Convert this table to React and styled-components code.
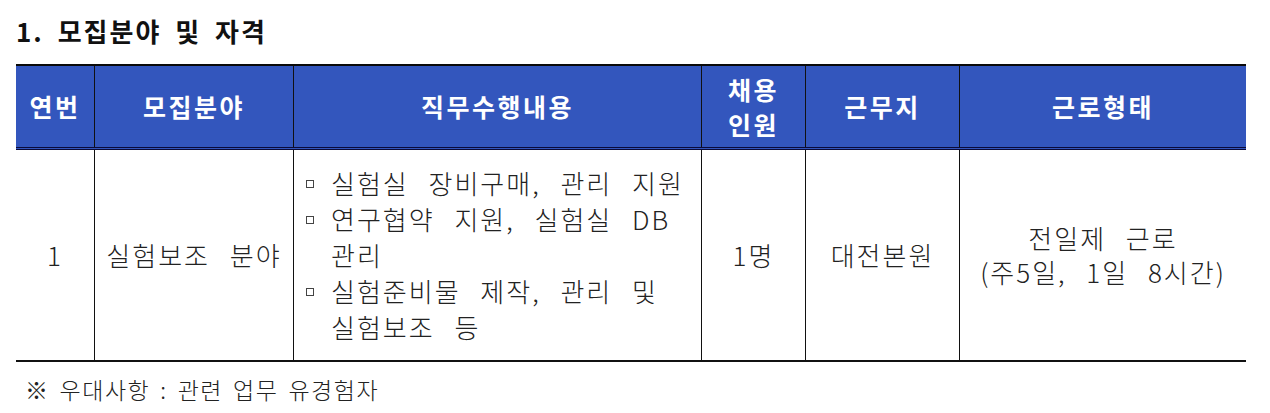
import React from "react";
import styled, { createGlobalStyle } from "styled-components";

const Global = createGlobalStyle`
  html, body { margin: 0; padding: 0; background: #fff; }
  body { font-family: "Noto Sans CJK KR", "Noto Sans", sans-serif; color: #1e1e1e; }
`;

const COLS = "78px 199px 408px 104px 154px 287px";

const Page = styled.div`
  width: 1270px;
  height: 413px;
  padding-left: 16px;
  box-sizing: border-box;
  overflow: hidden;
`;

const Title = styled.h2`
  margin: 0;
  height: 64px;
  padding-top: 15px;
  box-sizing: border-box;
  font-size: 26px;
  line-height: 32px;
  font-weight: 700;
  color: #111;
  letter-spacing: 2px;
  word-spacing: 6px;
  white-space: nowrap;
`;

const Table = styled.div`
  width: 1230px;
`;

const Row = styled.div`
  display: grid;
  grid-template-columns: ${COLS};
  height: ${(p) => p.$h}px;
  border-top: ${(p) => (p.$head ? "2px solid #0a0a0a" : "none")};
  border-bottom: ${(p) => (p.$head ? "3px double #0a0a3a" : "2px solid #111")};
  background: ${(p) => (p.$head ? "#3356bd" : "#fff")};
  box-sizing: content-box;
`;

const HeadCell = styled.div`
  display: flex;
  align-items: center;
  justify-content: center;
  text-align: center;
  color: #fff;
  font-weight: 700;
  font-size: 25px;
  line-height: 35px;
  letter-spacing: 2.5px;
  white-space: nowrap;
  border-left: ${(p) => (p.$first ? "none" : "1px solid #111")};
`;

const Cell = styled.div`
  display: flex;
  align-items: center;
  justify-content: ${(p) => (p.$left ? "flex-start" : "center")};
  text-align: ${(p) => (p.$left ? "left" : "center")};
  font-size: 26px;
  font-weight: 300;
  line-height: ${(p) => p.$lh || 36}px;
  padding-left: ${(p) => (p.$left ? 12 : 0)}px;
  letter-spacing: 2px;
  word-spacing: 12px;
  white-space: nowrap;
  border-left: ${(p) => (p.$first ? "none" : "1px solid #111")};
  color: #222;
`;

const List = styled.ul`
  margin: 0;
  padding: 0;
  list-style: none;
`;

const Item = styled.li`
  display: flex;
`;

const Bullet = styled.span`
  flex: 0 0 25px;
  position: relative;
  &::before {
    content: "";
    position: absolute;
    left: 0;
    top: 15px;
    width: 6px;
    height: 6px;
    border: 1px solid #444;
    background: #fff;
  }
`;

const Note = styled.p`
  margin: 0;
  padding: 12px 0 0 9px;
  font-size: 23px;
  font-weight: 300;
  line-height: 30px;
  letter-spacing: 1.5px;
  word-spacing: 3.5px;
  white-space: nowrap;
  color: #222;
`;

export default function App() {
  return (
    <Page>
      <Global />
      <Title>1. 모집분야 및 자격</Title>
      <Table>
        <Row $head $h={81}>
          <HeadCell $first>연번</HeadCell>
          <HeadCell>모집분야</HeadCell>
          <HeadCell>직무수행내용</HeadCell>
          <HeadCell>
            채용
            <br />
            인원
          </HeadCell>
          <HeadCell>근무지</HeadCell>
          <HeadCell>근로형태</HeadCell>
        </Row>
        <Row $h={210}>
          <Cell $first>1</Cell>
          <Cell>실험보조 분야</Cell>
          <Cell $left>
            <List>
              <Item>
                <Bullet />
                <span>실험실 장비구매, 관리 지원</span>
              </Item>
              <Item>
                <Bullet />
                <span>
                  연구협약 지원, 실험실 DB
                  <br />
                  관리
                </span>
              </Item>
              <Item>
                <Bullet />
                <span>
                  실험준비물 제작, 관리 및
                  <br />
                  실험보조 등
                </span>
              </Item>
            </List>
          </Cell>
          <Cell>1명</Cell>
          <Cell>대전본원</Cell>
          <Cell $lh={34}>
            전일제 근로
            <br />
            (주5일, 1일 8시간)
          </Cell>
        </Row>
      </Table>
      <Note>※ 우대사항 : 관련 업무 유경험자</Note>
    </Page>
  );
}
